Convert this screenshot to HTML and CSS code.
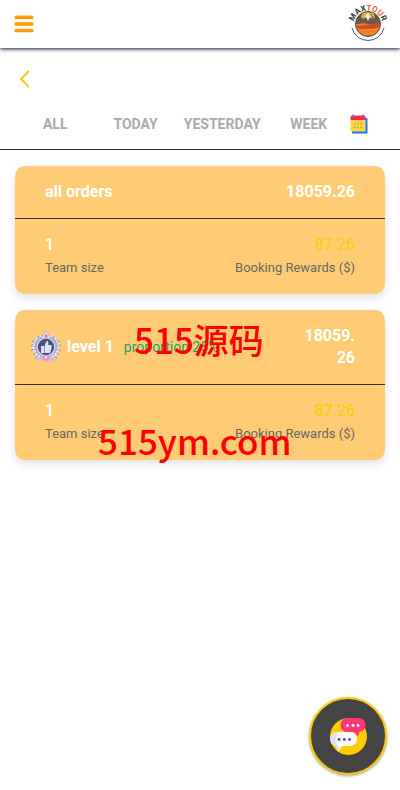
FILE: index.html
```html
<!DOCTYPE html>
<html lang="en">
<head>
<meta charset="utf-8">
<meta name="viewport" content="width=device-width, initial-scale=1">
<title>Orders</title>
<link rel="stylesheet" href="styles.css">
</head>
<body>
<header class="topbar">
  <button class="icon-button" type="button" aria-label="Menu">
    <svg width="20" height="18" viewBox="0 0 20 18"><defs><linearGradient id="bar" x2="0" y2="1"><stop stop-color="#ffb300"/><stop offset="1" stop-color="#ff8500"/></linearGradient></defs><g fill="url(#bar)"><rect x="0.5" y="0.5" width="19" height="3.6" rx="1.6"/><rect x="0.5" y="7.1" width="19" height="3.6" rx="1.6"/><rect x="0.5" y="13.7" width="19" height="3.6" rx="1.6"/></g></svg>
  </button>
  <a class="logo" href="#" aria-label="Maxtour">
    <svg width="40" height="40" viewBox="0 0 40 40">
      <defs><clipPath id="disc"><circle cx="20" cy="20" r="12"/></clipPath><path id="ring" d="M5.500 21A14.500 14.500 0 0 1 34.500 21"/></defs>
      <path d="M4 24A16.500 16.500 0 0 0 36 24" fill="none" stroke="#444" stroke-width="0.900"/>
      <g clip-path="url(#disc)">
        <rect width="40" height="40" fill="#f5a51c"/>
        <path d="M6 6h9l-4 14H6zM25 6h9v14h-5z" fill="#246447"/>
        <path d="M6 20l6-7 3 2 5-7 6 6 3-1 6 8z" fill="#655b51"/>
        <path d="M15 15l5-7 5 7-3-2-2 4-2-4z" fill="#f5e9d6"/>
        <path d="M6 22q7-4 14-2t14-1v16H6z" fill="#f17824"/>
        <path d="M8 22q10 0 24-4l-1 5q-9 4-22 1z" fill="#cd4a26"/>
        <path d="M9 28q10-4 23-2M13 31q8-3 17-2" fill="none" stroke="#f99a35"/>
      </g>
      <circle cx="20" cy="20" r="12.500" fill="none" stroke="#3d3d39"/>
      <text class="logo-text" text-anchor="middle"><textPath href="#ring" startOffset="50%">MAX<tspan class="logo-tour">TOU</tspan>R</textPath></text>
    </svg>
  </a>
</header>

<main>
  <button class="back icon-button" type="button" aria-label="Back">
    <svg width="12" height="20" viewBox="0 0 12 20"><path d="M10 2L2 10l8 8" fill="none" stroke="#fecb00" stroke-width="2"/></svg>
  </button>
  <nav class="tabs">
    <button type="button">ALL</button>
    <button type="button">TODAY</button>
    <button type="button" class="wide">YESTERDAY</button>
    <button type="button">WEEK</button>
    <button type="button" class="calendar" aria-label="Choose dates">
      <svg width="18" height="20" viewBox="0 0 18 20"><rect x="2" y="4" width="15.500" height="15.500" rx="1" fill="#147dff"/><path d="M0.500 6h15v11.500h-14l-1-1z" fill="#ffd43d"/><path d="M0.500 6V3q0-1.500 1.500-1.500h12q1.500 0 1.500 1.500v3z" fill="#ff2855"/><path d="M3 0.500v2.500M13 0.500v2.500" stroke="#3484ff" stroke-width="1.500"/><g fill="#a5a660"><path d="M4 9h1.400v1.400H4zM7.300 9h1.400v1.400H7.300zM10.600 9H12v1.400h-1.400zM4 12.500h1.400v1.400H4zM7.300 12.500h1.400v1.400H7.300zM10.600 12.500H12v1.400h-1.400z"/></g></svg>
    </button>
  </nav>

  <div class="cards">
    <section class="card">
      <div class="card-head">
        <h2>all orders</h2>
        <strong class="amount">18059.26</strong>
      </div>
      <div class="card-body">
        <div><b class="count">1</b><span class="label">Team size</span></div>
        <div class="right"><span class="reward">87.26</span><span class="label">Booking Rewards ($)</span></div>
      </div>
    </section>
    <section class="card">
      <div class="card-head level">
        <svg class="badge" width="32" height="32" viewBox="0 0 32 32">
          <path d="M13 4Q3 5 2.500 15T12 29l4-2 4 2q10-5 9.500-14T19 4z" fill="#a9a8ca"/>
          <g fill="none" stroke="#efeaff" stroke-width="2.200" stroke-dasharray="2.500 1"><path d="M11 5Q3 8 3.500 16T12 27M21 5q8 3 7.500 11T20 27"/></g>
          <g fill="none" stroke="#77759f" stroke-width="0.700"><path d="M10 5l-3 2M5 9l-3 2M3 13l-2 2M3 18l-2 2M5 22l-2 2M8 26l-3 1M22 5l3 2M27 9l3 2M29 13l2 2M29 18l2 2M27 22l2 2M24 26l3 1"/></g>
          <path d="M7 26l-2 4 5-1 2 2 2-4M25 26l2 4-5-1-2 2-2-4" fill="#c6c0dd"/>
          <circle cx="16" cy="16" r="9.500" fill="#d9d8ea"/><circle cx="16" cy="16" r="8.200" fill="#465276"/>
          <path d="M11 15h3v7h-3zM14.500 15l2-5q2 0 2 2l-.5 2H21q1.500 1 .5 3l-1 4-1 1h-5z" fill="#e2dcff"/>
          <path d="M16 0l3 4 3 3H10l3-3z" fill="#e7deef" stroke="#9d95b5" stroke-width="0.500"/><path d="M16 3l2 2-2 2-2-2z" fill="#f06fc0"/>
          <path d="M12 25l2-1 2 1 2-1 2 1 0 2-4 4-4-4z" fill="#f38bd5"/><path d="M14 26l2-1 2 1-2 2z" fill="#ffd2f2"/>
        </svg>
        <h2>level 1</h2>
        <span class="proportion">proportion 25%</span>
        <strong class="amount">18059.<wbr>26</strong>
      </div>
      <div class="card-body">
        <div><b class="count">1</b><span class="label">Team size</span></div>
        <div class="right"><span class="reward">87.26</span><span class="label">Booking Rewards ($)</span></div>
      </div>
    </section>
  </div>
</main>

<div class="watermark watermark-name">515源码</div>
<div class="watermark watermark-site">515ym.com</div>

<button class="chat" type="button" aria-label="Chat">
  <svg width="40" height="40" viewBox="0 0 40 40"><circle cx="20.500" cy="20.500" r="18.500" fill="#ffcd00"/><path d="M19 2h11.500a6.500 7 0 0 1 1 14l-1.500 4.500-4-4.500h-7a6.500 7 0 0 1 0-14z" fill="#ff3779"/><path d="M9.500 16h13a6.500 7 0 0 1 0 14H14l-4 5.500-2-5.500a6.500 7 0 0 1 1.500-14z" fill="#f8f8fc"/><path d="M9.500 16a6.500 7 0 0 0-1.500 14l2 5.500 1-4q-6-6-1.500-15.500z" fill="#dedfea"/><g fill="#fff"><circle cx="19.500" cy="9.500" r="1.400"/><circle cx="25" cy="9.500" r="1.400"/><circle cx="30" cy="9.500" r="1.400"/></g><g fill="#6044a5"><circle cx="11" cy="23.500" r="1.400"/><circle cx="16.300" cy="23.500" r="1.400"/><circle cx="21.600" cy="23.500" r="1.400"/></g></svg>
</button>
</body>
</html>
```

FILE: styles.css
```css
* {
  box-sizing: border-box;
}

body {
  margin: 0;
  min-height: 100vh;
  position: relative;
  background: #fff;
  font-family: Roboto, "Noto Sans CJK SC", sans-serif;
  font-size: 16px;
  line-height: 22px;
}

button {
  border: 0;
  padding: 0;
  background: none;
  font: inherit;
  cursor: pointer;
}

svg {
  display: block;
  overflow: visible;
}

.topbar {
  display: flex;
  align-items: center;
  justify-content: space-between;
  height: 48px;
  padding: 0 12px 0 14px;
  box-shadow: 0 1px 4px #001529;
}

.logo-text {
  font: bold 8px Roboto, sans-serif;
  fill: #333;
}

.logo-tour {
  fill: #e5652c;
}

.back {
  display: block;
  margin: 21px 0 0 19px;
}

.tabs {
  display: grid;
  grid-template-columns: 1fr 1fr auto 1fr 36px;
  align-items: center;
  height: 50px;
  margin-top: 11px;
  padding: 0 15px 2px;
  border-bottom: 1px solid #333;
}

.tabs button {
  color: #aaa;
  font-size: 14px;
  font-weight: 700;
}

.tabs .wide {
  padding: 0 8px;
}

.tabs .calendar {
  padding-left: 1px;
}

.cards {
  display: flex;
  flex-direction: column;
  gap: 16px;
  padding: 16px 15px;
}

.card {
  border-radius: 10px;
  background: #ffcc75;
  box-shadow: 0 4px 10px rgba(0, 0, 0, 0.12);
}

.card-head {
  display: flex;
  align-items: center;
  padding: 15px 30px;
  border-bottom: 1px solid #333;
  color: #fff;
}

.card-head h2 {
  margin: 0;
  font-size: 16px;
  font-weight: 700;
}

.level {
  padding-left: 15px;
}

.badge {
  margin-right: 5px;
}

.proportion {
  margin-left: 10px;
  color: #1a9f70;
  font-size: 14px;
}

.amount {
  margin-left: auto;
  text-align: right;
}

.level .amount {
  width: 52px;
}

.card-body {
  display: flex;
  justify-content: space-between;
  padding: 15px 30px;
}

.count,
.reward,
.label {
  display: block;
}

.count {
  color: #fff;
  font-weight: 500;
}

.reward {
  color: #fecb00;
}

.label {
  margin-top: 1px;
  color: #666;
  font-size: 13px;
}

.right {
  text-align: right;
}

.watermark {
  position: absolute;
  color: #f00;
  font-family: "Noto Sans CJK SC", sans-serif;
  font-size: 35px;
  font-weight: 500;
  line-height: 40px;
  white-space: nowrap;
  pointer-events: none;
}

.watermark-name {
  top: 319px;
  left: 134px;
}

.watermark-site {
  top: 420px;
  left: 98px;
}

.chat {
  position: fixed;
  right: 13px;
  bottom: 15px;
  display: grid;
  place-items: center;
  width: 78px;
  height: 78px;
  border: 2px solid #fecb00;
  border-radius: 50%;
  background: #444;
  box-shadow: 0 1px 3px rgba(0, 0, 0, 0.4);
}
```
